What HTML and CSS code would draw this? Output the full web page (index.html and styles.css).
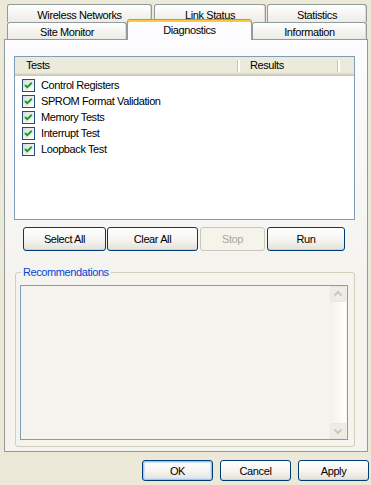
FILE: index.html
```html
<!DOCTYPE html>
<html lang="en">
<head>
    <meta charset="UTF-8">
    <meta name="viewport" content="width=device-width, initial-scale=1.0">
    <title>Diagnostics</title>
    <link rel="stylesheet" href="styles.css">
</head>
<body>
    <div class="dialog">
        <div class="tabs">
            <div class="tab-row back">
                <div class="tab tab-wireless">Wireless Networks</div>
                <div class="tab tab-link">Link Status</div>
                <div class="tab tab-stats">Statistics</div>
            </div>
            <div class="tab-row front">
                <div class="tab tab-site">Site Monitor</div>
                <div class="tab tab-diag active">Diagnostics</div>
                <div class="tab tab-info">Information</div>
            </div>
        </div>

        <section class="panel">
            <div class="listview">
                <div class="lv-header">
                    <div class="col col-tests">Tests</div>
                    <div class="col col-results">Results</div>
                    <div class="col col-rest"></div>
                </div>
                <ul class="lv-items" id="testList"></ul>
            </div>

            <div class="actions">
                <button class="btn btn-select">Select All</button>
                <button class="btn btn-clear">Clear All</button>
                <button class="btn btn-stop" disabled>Stop</button>
                <button class="btn btn-run">Run</button>
            </div>

            <fieldset class="group">
                <legend>Recommendations</legend>
                <div class="memo">
                    <div class="memo-text"></div>
                    <div class="scrollbar">
                        <div class="sb-btn">
                            <svg width="16" height="16" viewBox="0 0 16 16"><path d="M4.5 9.5 L8 6 L11.5 9.5" fill="none" stroke="#c9c7ba" stroke-width="2"/></svg>
                        </div>
                        <div class="sb-track"></div>
                        <div class="sb-btn">
                            <svg width="16" height="16" viewBox="0 0 16 16"><path d="M4.5 6.5 L8 10 L11.5 6.5" fill="none" stroke="#c9c7ba" stroke-width="2"/></svg>
                        </div>
                    </div>
                </div>
            </fieldset>
        </section>

        <div class="footer">
            <button class="btn btn-ok">OK</button>
            <button class="btn">Cancel</button>
            <button class="btn">Apply</button>
        </div>
    </div>
    <script>
        const tests = [
            "Control Registers",
            "SPROM Format Validation",
            "Memory Tests",
            "Interrupt Test",
            "Loopback Test"
        ];
        const list = document.getElementById("testList");
        tests.forEach(function(name) {
            const li = document.createElement("li");
            li.innerHTML = `
                <span class="check"><svg width="11" height="11" viewBox="0 0 11 11"><path d="M2 5 L4.2 7.3 L8.8 2.7" fill="none" stroke="#21a121" stroke-width="2"/></svg></span>
                <span class="label">${name}</span>
            `;
            list.appendChild(li);
        });
    </script>
</body>
</html>
```

FILE: styles.css
```css
* {
    margin: 0;
    padding: 0;
    box-sizing: border-box;
}
body {
    font-family: "Liberation Sans", Arial, sans-serif;
    font-size: 11px;
    letter-spacing: -0.4px;
    background-color: #ece9d8;
    color: #000;
}
.tabs {
    padding-top: 4px;
}
.tab-row {
    display: flex;
    padding-left: 7px;
}
.tab {
    border: 1px solid #919b9c;
    border-bottom: none;
    border-radius: 3px 3px 0 0;
    background: linear-gradient(#ffffff, #ecebe6);
    box-shadow: inset -1px 0 #dcdad2;
    text-align: center;
    line-height: 13px;
    white-space: nowrap;
}
.back {
    height: 18px;
}
.back .tab {
    height: 18px;
    padding-top: 4px;
    margin-right: 1px;
}
.tab-wireless { width: 145px; }
.tab-link { width: 112px; margin-left: 1px; }
.tab-stats { width: 100px; }
.front {
    height: 17px;
    align-items: flex-end;
}
.front .tab {
    height: 17px;
    padding-top: 3px;
}
.tab-site { width: 120px; }
.tab-diag { width: 125px; }
.tab-info { width: 115px; }
.tab.active {
    position: relative;
    z-index: 2;
    height: 21px;
    margin-bottom: -1px;
    padding-top: 4px;
    background: #fcfcfe;
    border-top-color: #e68b2c;
    box-shadow: inset 0 2px 0 #ffc83c;
}
.panel {
    margin: 0 3px 0 4px;
    height: 413px;
    border: 1px solid #919b9c;
    background: linear-gradient(#fcfcfe, #f4f3ee 60%, #f4f3ee);
    padding: 16px 0 0 9px;
}
.listview {
    width: 341px;
    height: 164px;
    border: 1px solid #7f9db9;
    background-color: #fff;
}
.lv-header {
    display: flex;
    height: 19px;
    background-color: #ebeadb;
    box-shadow: inset 0 -1px #cbc7b8, inset 0 -2px #d6d2c2, inset 0 -3px #e2decd;
}
.col {
    position: relative;
    line-height: 17px;
}
.col-tests {
    width: 225px;
    padding-left: 11px;
}
.col-results {
    width: 100px;
    padding-left: 10px;
}
.col-tests::after, .col-results::after {
    content: "";
    position: absolute;
    right: 0;
    top: 3px;
    height: 12px;
    width: 2px;
    border-left: 1px solid #cbc7b8;
    background-color: #fff;
}
.lv-items {
    list-style: none;
    padding-top: 1px;
}
.lv-items li {
    display: flex;
    align-items: center;
    height: 16px;
    padding-left: 7px;
}
.check {
    display: flex;
    align-items: center;
    justify-content: center;
    width: 13px;
    height: 13px;
    border: 1px solid #1c5180;
    background: linear-gradient(135deg, #dcdcd7, #ffffff);
    margin-right: 6px;
}
.actions {
    display: flex;
    margin-top: 7px;
    padding-left: 9px;
}
.btn {
    font-family: "Liberation Sans", Arial, sans-serif;
    font-size: 11px;
    letter-spacing: -0.4px;
    color: #000;
    border: 1px solid #003c74;
    border-radius: 3px;
    background: linear-gradient(#ffffff, #f5f4f0 55%, #e3e1d8);
    box-shadow: inset 0 -1px #d6d0c5;
}
.actions .btn {
    height: 24px;
}
.btn-select { width: 83px; }
.btn-clear { width: 91px; margin-left: 1px; }
.btn-stop { width: 65px; margin-left: 2px; }
.btn-run { width: 78px; margin-left: 2px; }
.btn:disabled {
    color: #aca899;
    border-color: #c9c7ba;
    background: #f5f4ea;
    box-shadow: none;
}
.group {
    margin: 15px 0 0 1px;
    width: 340px;
    border: 1px solid #d0d0bf;
    border-radius: 3px;
    padding: 6px 6px 6px 4px;
}
.group legend {
    margin-left: 1px;
    padding: 0 2px;
    color: #0046d5;
    line-height: 13px;
}
.memo {
    display: flex;
    width: 328px;
    height: 155px;
    border: 1px solid #7f9db9;
    background-color: #f4f3ee;
}
.memo-text {
    flex: 1;
}
.scrollbar {
    display: flex;
    flex-direction: column;
    width: 16px;
    margin-right: 1px;
}
.sb-btn {
    height: 16px;
    border: 1px solid #e8e6de;
    border-radius: 2px;
    background-color: #eeede5;
}
.sb-btn svg {
    display: block;
    margin: -1px;
}
.sb-track {
    flex: 1;
    background: linear-gradient(to right, #f3f1ec, #fefefb);
}
.footer {
    display: flex;
    justify-content: flex-end;
    gap: 7px;
    margin-top: 8px;
    padding-right: 2px;
}
.footer .btn {
    width: 71px;
    height: 21px;
}
.btn-ok {
    box-shadow: inset 0 0 0 1px #a6c4f2, inset 0 0 0 2px #cfe0fa;
}
```
